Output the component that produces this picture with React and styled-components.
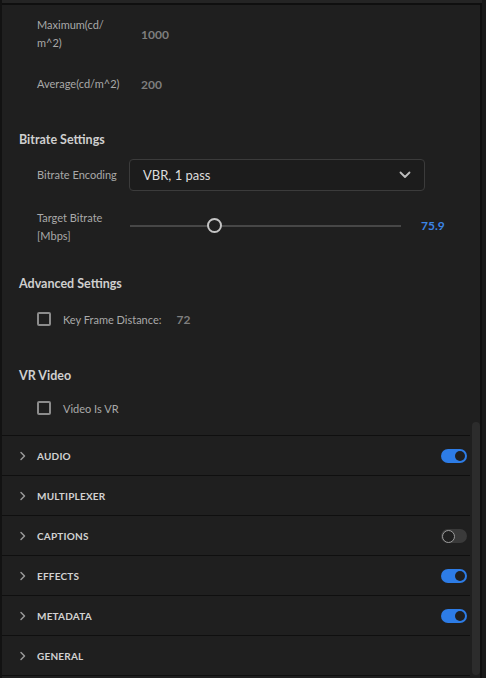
import styled, { createGlobalStyle } from 'styled-components';

const GlobalStyle = createGlobalStyle`
  html, body {
    margin: 0;
    padding: 0;
    background: #1f1f1f;
  }
  * {
    box-sizing: border-box;
  }
`;

const font = `Lato, "Noto Sans", "Liberation Sans", sans-serif`;

const accordion = [
  { name: 'AUDIO', toggle: true },
  { name: 'MULTIPLEXER' },
  { name: 'CAPTIONS', toggle: false },
  { name: 'EFFECTS', toggle: true },
  { name: 'METADATA', toggle: true },
  { name: 'GENERAL' },
];

const Chevron = () => (
  <svg width="10" height="10" viewBox="0 0 10 10">
    <path d="M3 1.5 L6.5 5 L3 8.5" fill="none" stroke="#9a9a9a" strokeWidth="1.5" strokeLinecap="round" strokeLinejoin="round" />
  </svg>
);

const ChevronDown = () => (
  <svg width="12" height="8" viewBox="0 0 12 8">
    <path d="M1.5 1.5 L6 6 L10.5 1.5" fill="none" stroke="#bdbdbd" strokeWidth="1.8" strokeLinecap="round" strokeLinejoin="round" />
  </svg>
);

const App = () => {
  return (
    <>
      <GlobalStyle />
      <Frame>
        <TopEdge />
        <Body>
          <Row $top={11}>
            <Label>
              Maximum(cd/
              <br />
              m^2)
            </Label>
            <Value>1000</Value>
          </Row>
          <Row $top={23}>
            <Label>Average(cd/m^2)</Label>
            <Value>200</Value>
          </Row>

          <Heading $top={38}>Bitrate Settings</Heading>
          <Row $top={10}>
            <Label>Bitrate Encoding</Label>
            <Select>
              <span>VBR, 1 pass</span>
              <ChevronDown />
            </Select>
          </Row>
          <Row $top={18}>
            <Label>
              Target Bitrate
              <br />
              [Mbps]
            </Label>
            <Slider>
              <Track>
                <Thumb style={{ left: `${(84 / 270) * 100}%` }} />
              </Track>
              <SliderValue>75.9</SliderValue>
            </Slider>
          </Row>

          <Heading $top={30}>Advanced Settings</Heading>
          <CheckRow $top={17}>
            <Box />
            <CheckLabel>Key Frame Distance:</CheckLabel>
            <Value $plain>72</Value>
          </CheckRow>

          <Heading $top={39}>VR Video</Heading>
          <CheckRow $top={14}>
            <Box />
            <CheckLabel>Video Is VR</CheckLabel>
          </CheckRow>
        </Body>

        <Accordion>
          {accordion.map((item) => (
            <AccordionRow key={item.name}>
              <Chevron />
              <AccordionTitle>{item.name}</AccordionTitle>
              {item.toggle !== undefined && <Toggle $on={item.toggle} />}
            </AccordionRow>
          ))}
        </Accordion>
        <Scrollbar />
      </Frame>
    </>
  );
};

export default App;

const Frame = styled.div`
  position: relative;
  width: 486px;
  height: 678px;
  display: flex;
  flex-direction: column;
  background: #1f1f1f;
  border-left: 2px solid #121212;
  border-right: 4px solid #1a1a1a;
  box-shadow: inset -2px 0 0 #101010;
  font-family: ${font};
  overflow: hidden;
`;

const TopEdge = styled.div`
  height: 5px;
  flex-shrink: 0;
  background: #242424;
  border-bottom: 2px solid #0f0f0f;
`;

const Body = styled.div`
  padding: 0 0 18px 17px;
  display: flex;
  flex-direction: column;
`;

const Row = styled.div`
  display: flex;
  align-items: center;
  margin-top: ${(p) => p.$top}px;
  padding-left: 18px;
`;

const Label = styled.div`
  width: 92px;
  flex-shrink: 0;
  font-size: 11px;
  line-height: 18px;
  color: #a9a9a9;
`;

const Value = styled.div`
  font-size: 12px;
  font-weight: 700;
  color: #7e7e7e;
  padding-left: ${(p) => (p.$plain ? 0 : 12)}px;
`;

const Heading = styled.div`
  margin-top: ${(p) => p.$top}px;
  font-size: 12.5px;
  line-height: 18px;
  font-weight: 700;
  color: #cfcfcf;
`;

const Select = styled.div`
  width: 296px;
  height: 32px;
  display: flex;
  align-items: center;
  justify-content: space-between;
  padding: 0 13px 0 13px;
  background: #1c1c1c;
  border: 1px solid #3b3b3b;
  border-radius: 4px;
  font-size: 13px;
  color: #dcdcdc;
`;

const Slider = styled.div`
  display: flex;
  align-items: center;
  gap: 20px;
  margin-top: -3px;
`;

const Track = styled.div`
  position: relative;
  width: 271px;
  height: 2px;
  background: #474747;
  margin-left: 1px;
`;

const Thumb = styled.div`
  position: absolute;
  top: 50%;
  width: 15px;
  height: 15px;
  margin: -7.5px 0 0 -7.5px;
  border-radius: 50%;
  background: #1f1f1f;
  border: 2px solid #c4c4c4;
`;

const SliderValue = styled.div`
  font-size: 12px;
  font-weight: 700;
  color: #3b85e6;
`;

const CheckRow = styled.div`
  display: flex;
  align-items: center;
  height: 18px;
  margin-top: ${(p) => p.$top}px;
  padding-left: 18px;
`;

const Box = styled.div`
  width: 14px;
  height: 14px;
  border: 2px solid #8c8c8c;
  border-radius: 2px;
  margin-right: 12px;
`;

const CheckLabel = styled.div`
  font-size: 11px;
  color: #a9a9a9;
  margin-right: 15px;
`;

const Accordion = styled.div`
  display: flex;
  flex-direction: column;
  border-top: 1px solid #0f0f0f;
  width: 468px;
`;

const AccordionRow = styled.div`
  display: flex;
  align-items: center;
  height: 40px;
  padding: 0 3px 0 16px;
  border-bottom: 1px solid #0f0f0f;
`;

const AccordionTitle = styled.div`
  flex: 1;
  margin-left: 9px;
  font-size: 10px;
  font-weight: 700;
  letter-spacing: 0.2px;
  color: #d2d2d2;
`;

const Toggle = styled.div`
  position: relative;
  width: 26px;
  height: 14px;
  border-radius: 7px;
  background: ${(p) => (p.$on ? '#2d7ce6' : '#3a3a3a')};

  &::after {
    content: '';
    position: absolute;
    left: ${(p) => (p.$on ? '14px' : '1px')};
    top: ${(p) => (p.$on ? '2px' : '1.5px')};
    width: ${(p) => (p.$on ? '10px' : '11px')};
    height: ${(p) => (p.$on ? '10px' : '11px')};
    border-radius: 50%;
    background: #1f1f1f;
    border: ${(p) => (p.$on ? 'none' : '1.5px solid #9c9c9c')};
  }
`;

const Scrollbar = styled.div`
  position: absolute;
  right: 2px;
  top: 422px;
  width: 8px;
  height: 253px;
  border-radius: 4px;
  background: #2c2c2c;
`;
